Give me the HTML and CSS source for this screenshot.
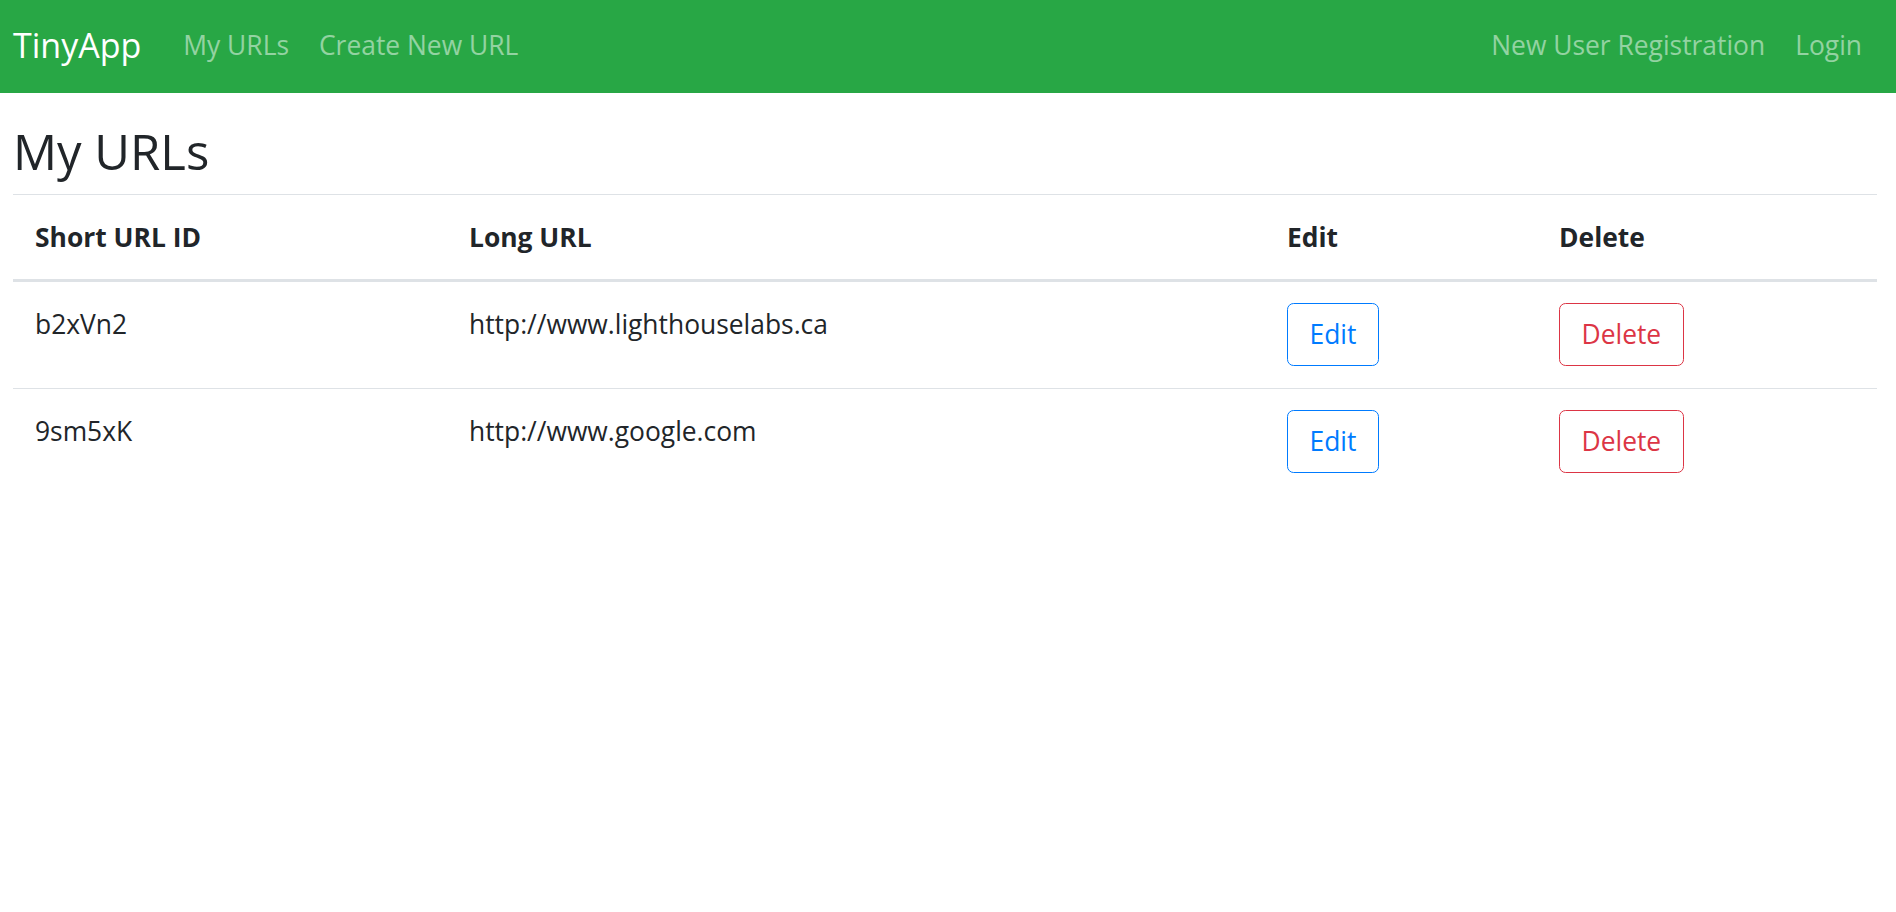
FILE: index.html
```html
<!DOCTYPE html>
<html lang="en">
<head>
<meta charset="utf-8">
<title>TinyApp</title>
<link rel="stylesheet" href="styles.css">
</head>
<body>
<nav class="navbar">
  <a class="brand" href="#">TinyApp</a>
  <div class="nav-group">
    <a class="nav-link" href="#">My URLs</a>
    <a class="nav-link" href="#">Create New URL</a>
  </div>
  <div class="nav-group nav-right">
    <a class="nav-link" href="#">New User Registration</a>
    <a class="nav-link" href="#">Login</a>
  </div>
</nav>
<main class="content">
  <h2 class="title">My URLs</h2>
  <table class="url-table">
    <colgroup>
      <col class="col-short">
      <col class="col-long">
      <col class="col-edit">
      <col class="col-delete">
    </colgroup>
    <thead>
      <tr>
        <th>Short URL ID</th>
        <th>Long URL</th>
        <th>Edit</th>
        <th>Delete</th>
      </tr>
    </thead>
    <tbody>
      <tr>
        <td class="cell-text">b2xVn2</td>
        <td class="cell-text">http://www.lighthouselabs.ca</td>
        <td><button class="btn btn-edit">Edit</button></td>
        <td><button class="btn btn-delete">Delete</button></td>
      </tr>
      <tr>
        <td class="cell-text">9sm5xK</td>
        <td class="cell-text">http://www.google.com</td>
        <td><button class="btn btn-edit">Edit</button></td>
        <td><button class="btn btn-delete">Delete</button></td>
      </tr>
    </tbody>
  </table>
</main>
</body>
</html>
```
FILE: styles.css
```css
html, body {
  margin: 0;
  padding: 0;
  background: #fff;
}
body {
  font-family: "Open Sans", "Noto Sans", "Liberation Sans", sans-serif;
  font-size: 26.4px;
  line-height: 1.5;
  color: #212529;
}
a {
  text-decoration: none;
}
.navbar {
  display: flex;
  align-items: center;
  height: 93px;
  box-sizing: border-box;
  padding: 0 19px 2px 13px;
  background: #28a745;
}
.brand {
  color: #fff;
  font-size: 34px;
  line-height: 1.5;
  margin-right: 27px;
}
.nav-group {
  display: flex;
  align-items: center;
}
.nav-right {
  margin-left: auto;
}
.nav-link {
  color: rgba(255, 255, 255, 0.5);
  padding: 0 15px;
  line-height: 1.5;
}
.content {
  padding: 0 19px 0 13px;
}
.title {
  font-size: 49px;
  font-weight: 500;
  line-height: 1.2;
  margin: 28.6px 0 13.6px;
  color: #212529;
}
.url-table {
  width: 100%;
  border-collapse: collapse;
  table-layout: fixed;
}
.col-short { width: 434px; }
.col-long { width: 818px; }
.col-edit { width: 272px; }
.col-delete { width: auto; }
.url-table th {
  text-align: left;
  font-weight: 700;
  vertical-align: bottom;
  padding: 23px 22px 21.4px;
  border-top: 1px solid #dee2e6;
  border-bottom: 3px solid #dee2e6;
}
.url-table td {
  vertical-align: top;
  padding: 21.5px 22px;
}
.url-table td.cell-text {
  padding-top: 23.5px;
}
.url-table tbody tr + tr td {
  border-top: 1px solid #dee2e6;
}
.btn {
  font-family: inherit;
  font-size: 26.4px;
  line-height: 39.6px;
  padding: 10.6px 21.5px;
  border-width: 1.6px;
  border-style: solid;
  border-radius: 6.6px;
  background: transparent;
  cursor: pointer;
  margin: 0;
}
.btn-edit {
  color: #007bff;
  border-color: #007bff;
}
.btn-delete {
  color: #dc3545;
  border-color: #dc3545;
}
```
